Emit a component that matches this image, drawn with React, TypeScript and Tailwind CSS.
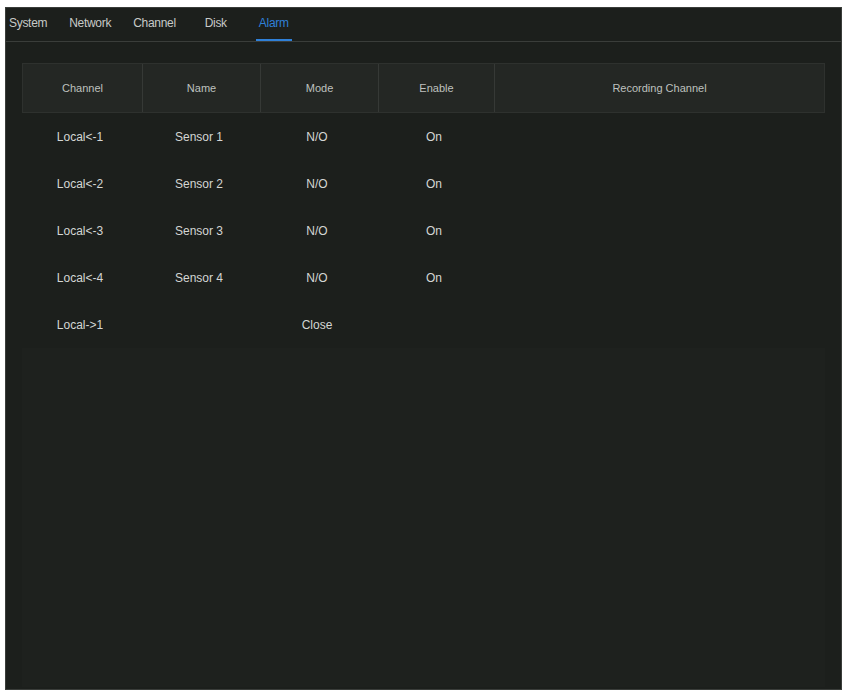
const tabs = ['System', 'Network', 'Channel', 'Disk', 'Alarm'];

const cols = [
  { label: 'Channel', w: 'w-[120px]' },
  { label: 'Name', w: 'w-[118px]' },
  { label: 'Mode', w: 'w-[118px]' },
  { label: 'Enable', w: 'w-[116px]' },
  { label: 'Recording Channel', w: 'flex-1' },
];

const rows = [
  ['Local<-1', 'Sensor 1', 'N/O', 'On'],
  ['Local<-2', 'Sensor 2', 'N/O', 'On'],
  ['Local<-3', 'Sensor 3', 'N/O', 'On'],
  ['Local<-4', 'Sensor 4', 'N/O', 'On'],
  ['Local->1', '', 'Close', ''],
];

export default function App() {
  return (
    <div className="w-[846px] h-[690px] bg-white pt-[7px] pl-[5px] pr-[4px] font-[Liberation_Sans,Arial,sans-serif]">
      <div className="h-full bg-[#1c1f1c] border border-[#3a3d3a] flex flex-col">
        <div className="h-[34px] flex items-end gap-[22px] px-[3px] border-b border-[#3a3d3a]">
          {tabs.map((t) => (
            <div key={t} className="flex flex-col items-center">
              <span
                className={`text-[12px] tracking-tight pb-[7px] ${t === 'Alarm' ? 'text-[#2f80d8]' : 'text-[#c8cac8]'}`}
              >
                {t}
              </span>
              <div className={`h-[2px] w-[36px] ${t === 'Alarm' ? 'bg-[#2f80d8]' : 'bg-transparent'}`} />
            </div>
          ))}
        </div>
        <div className="flex-1 mx-[16px] mt-[21px] mb-[2px] flex flex-col">
          <div className="flex h-[50px] bg-[#242724] border border-[#2e312e]">
            {cols.map((c, i) => (
              <div
                key={c.label}
                className={`${c.w} flex items-center justify-center text-[11px] text-[#bfc1bf] ${i < cols.length - 1 ? 'border-r border-[#363936]' : ''}`}
              >
                {c.label}
              </div>
            ))}
          </div>
          {rows.map((r, ri) => (
            <div key={ri} className="flex h-[47px]">
              {r.map((v, i) => (
                <div
                  key={i}
                  className={`${cols[i].w} flex items-center justify-center text-[12px] text-[#d4d6d4] pr-[4px]`}
                >
                  {v}
                </div>
              ))}
              <div className="flex-1" />
            </div>
          ))}
          <div className="flex-1 bg-[#1e211e]" />
        </div>
      </div>
    </div>
  );
}
